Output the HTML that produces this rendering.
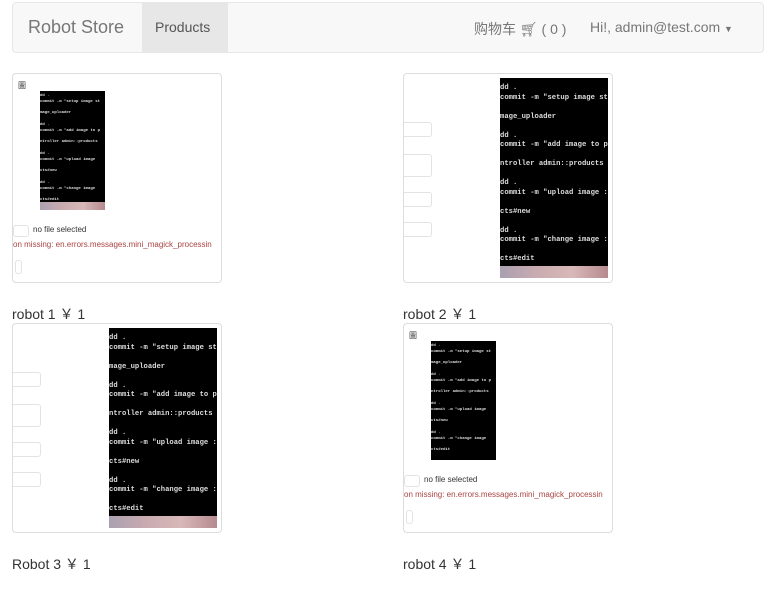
<!DOCTYPE html>
<html><head><meta charset="utf-8"><style>
body{margin:0;width:780px;height:606px;background:#fff;font-family:"Liberation Sans","Noto Sans CJK SC",sans-serif;position:relative;overflow:hidden;color:#333}
.nav{position:absolute;left:12px;top:2px;width:750px;height:49px;background:#f8f8f8;border:1px solid #e7e7e7;border-radius:4px}
.nav span{position:absolute;color:#777;font-size:14px;top:16px}
.brand{font-size:18px!important;left:15px;top:14px!important}
.act{position:absolute;left:129px;top:0;width:86px;height:49px;background:#e7e7e7}
.card{position:absolute;width:208px;height:208px;border:1px solid #ddd;border-radius:4px;background:#fff;overflow:hidden}
.blk{position:absolute;background:#000;color:#ddd;font-family:"Liberation Mono",monospace;white-space:pre;overflow:hidden;font-weight:bold}
.blk i{position:absolute;left:0;right:0;bottom:0;background:linear-gradient(90deg,#a9a0b0,#c9aab0,#d8b8b8,#b58a90)}
.lab{position:absolute;font-size:14px;color:#333}
.inp{position:absolute;border:1px solid #e3e3e3;border-radius:3px;background:#fff}
.sm{position:absolute;font-size:8px;color:#333}
.err{position:absolute;font-size:8px;color:#a94442;white-space:nowrap}
.big{left:96px;top:4px;width:108px;height:200px;font-size:7.2px;line-height:9.5px;padding-top:6px;box-sizing:border-box}
.lil{left:27px;top:17px;width:65px;height:119px;font-size:4px;line-height:5.8px;padding-top:3px;box-sizing:border-box}
</style></head><body>
<div class="nav">
<div class="act"></div>
<span class="brand">Robot Store</span>
<span style="left:142px;color:#555">Products</span>
<span style="left:461px">购物车 🛒︎ ( 0 )</span>
<span style="left:577px">Hi!, admin@test.com <small style="font-size:9px">▼</small></span>
</div>

<div class="card" style="left:12px;top:73px">
<div class="sm" style="left:5px;top:6px">圖</div>
<div class="blk lil">dd .
commit -m "setup image st

mage_uploader

dd .
commit -m "add image to p

ntroller admin::products

dd .
commit -m "upload image

cts#new

dd .
commit -m "change image

cts#edit<i style="height:8px"></i></div>
<div class="inp" style="left:0;top:151px;width:14px;height:10px"></div>
<div class="sm" style="left:20px;top:151px">no file selected</div>
<div class="err" style="left:0;top:166px">on missing: en.errors.messages.mini_magick_processin</div>
<div class="inp" style="left:2px;top:186px;width:5px;height:12px"></div>
</div>
<div class="lab" style="left:12px;top:304px">robot 1 ￥ 1</div>

<div class="card" style="left:403px;top:73px">
<div class="inp" style="left:-4px;top:48px;width:30px;height:13px"></div>
<div class="inp" style="left:-4px;top:80px;width:30px;height:21px"></div>
<div class="inp" style="left:-4px;top:118px;width:30px;height:13px"></div>
<div class="inp" style="left:-4px;top:148px;width:30px;height:13px"></div>
<div class="blk big">dd .
commit -m "setup image st

mage_uploader

dd .
commit -m "add image to p

ntroller admin::products

dd .
commit -m "upload image :

cts#new

dd .
commit -m "change image :

cts#edit<i style="height:12px"></i></div>
</div>
<div class="lab" style="left:403px;top:304px">robot 2 ￥ 1</div>

<div class="card" style="left:12px;top:323px">
<div class="inp" style="left:-4px;top:48px;width:30px;height:13px"></div>
<div class="inp" style="left:-4px;top:80px;width:30px;height:21px"></div>
<div class="inp" style="left:-4px;top:118px;width:30px;height:13px"></div>
<div class="inp" style="left:-4px;top:148px;width:30px;height:13px"></div>
<div class="blk big">dd .
commit -m "setup image st

mage_uploader

dd .
commit -m "add image to p

ntroller admin::products

dd .
commit -m "upload image :

cts#new

dd .
commit -m "change image :

cts#edit<i style="height:12px"></i></div>
</div>
<div class="lab" style="left:12px;top:554px">Robot 3 ￥ 1</div>

<div class="card" style="left:403px;top:323px">
<div class="sm" style="left:5px;top:6px">圖</div>
<div class="blk lil">dd .
commit -m "setup image st

mage_uploader

dd .
commit -m "add image to p

ntroller admin::products

dd .
commit -m "upload image

cts#new

dd .
commit -m "change image

cts#edit</div>
<div class="inp" style="left:0;top:151px;width:14px;height:10px"></div>
<div class="sm" style="left:20px;top:151px">no file selected</div>
<div class="err" style="left:0;top:166px">on missing: en.errors.messages.mini_magick_processin</div>
<div class="inp" style="left:2px;top:186px;width:5px;height:12px"></div>
</div>
<div class="lab" style="left:403px;top:554px">robot 4 ￥ 1</div>
</body></html>
